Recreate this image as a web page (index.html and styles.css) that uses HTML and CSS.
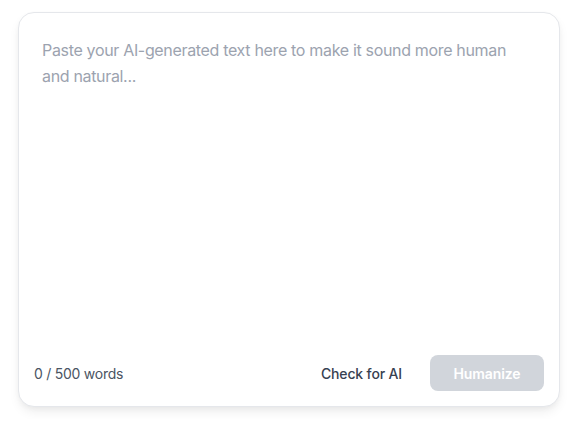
FILE: index.html
```html
<!DOCTYPE html>
<html>
<head>
<meta charset="utf-8">
<link rel="stylesheet" href="styles.css">
</head>
<body>
<div class="card">
  <textarea class="input" placeholder="Paste your AI-generated text here to make it sound more human and natural..."></textarea>
  <div class="footer">
    <span class="count">0 / 500 words</span>
    <div class="actions">
      <button class="btn-ghost">Check for AI</button>
      <button class="btn-primary" disabled>Humanize</button>
    </div>
  </div>
</div>
</body>
</html>
```
FILE: styles.css
```css
html, body { margin: 0; padding: 0; background: #fff; }
body {
  padding: 12px 18px;
  font-family: Inter, "Noto Sans", sans-serif;
}
.card {
  width: 540px;
  height: 393px;
  border: 1px solid #e5e7eb;
  border-radius: 16px;
  background: #fff;
  box-shadow: 0 6px 12px -2px rgba(0,0,0,0.08), 0 2px 6px -2px rgba(0,0,0,0.06);
  display: flex;
  flex-direction: column;
  overflow: hidden;
}
.input {
  flex: 1;
  border: none;
  outline: none;
  resize: none;
  padding: 24px 23px;
  font-family: inherit;
  font-size: 16px;
  line-height: 26px;
  letter-spacing: -0.33px;
  color: #111827;
  background: transparent;
}
.input::placeholder { color: #9ca3af; }
.footer {
  display: flex;
  align-items: center;
  justify-content: space-between;
  padding: 0 15px 15px 15px;
}
.count { font-size: 14px; color: #4b5563; letter-spacing: -0.25px; }
.actions { display: flex; align-items: center; gap: 12px; }
.btn-ghost {
  border: none;
  background: transparent;
  font-family: inherit;
  font-size: 14px;
  font-weight: 500;
  color: #374151;
  padding: 8px 16px;
  height: 36px;
  border-radius: 8px;
  letter-spacing: -0.15px;
}
.btn-primary {
  border: none;
  background: #d1d5db;
  color: #fff;
  font-family: inherit;
  font-size: 14px;
  font-weight: 600;
  width: 114px;
  height: 36px;
  border-radius: 8px;
  letter-spacing: -0.1px;
}
```
